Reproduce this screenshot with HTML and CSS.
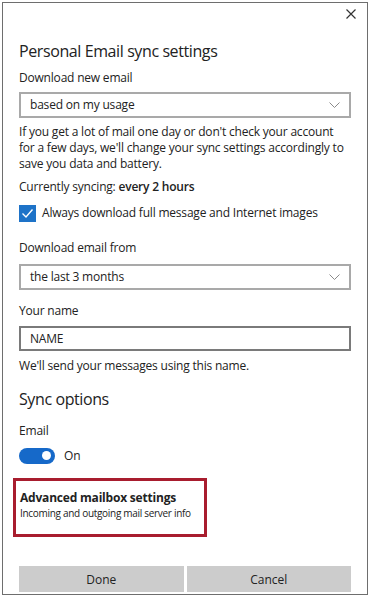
FILE: index.html
```html
<!DOCTYPE html>
<html lang="en">
<head>
  <meta charset="UTF-8">
  <meta name="viewport" content="width=device-width, initial-scale=1.0">
  <title>Personal Email sync settings</title>
  <link rel="stylesheet" href="styles.css">
</head>
<body>
  <div class="dialog">
    <div class="titlebar">
      <button class="close" aria-label="Close">
        <svg width="10" height="10" viewBox="0 0 10 10"><path d="M0.5 0.5 L9.5 9.5 M9.5 0.5 L0.5 9.5" stroke="#333" stroke-width="1.2" fill="none"/></svg>
      </button>
    </div>

    <div class="content">
      <h1>Personal Email sync settings</h1>

      <div class="label l-first">Download new email</div>
      <div class="select s-first">
        <span>based on my usage</span>
        <svg class="chevron" width="11" height="6" viewBox="0 0 11 6"><path d="M0.5 0.5 L5.5 5.5 L10.5 0.5" stroke="#8a8a8a" stroke-width="1" fill="none"/></svg>
      </div>

      <p class="note">If you get a lot of mail one day or don't check your account for a few days, we'll change your sync settings accordingly to save you data and battery.</p>

      <p class="status">Currently syncing: <b>every 2 hours</b></p>

      <label class="check">
        <span class="box">
          <svg width="17" height="17" viewBox="0 0 17 17"><path d="M3.5 8.5 L7 12 L13.5 4.5" stroke="#fff" stroke-width="1.4" fill="none"/></svg>
        </span>
        Always download full message and Internet images
      </label>

      <div class="label l-from">Download email from</div>
      <div class="select s-from">
        <span>the last 3 months</span>
        <svg class="chevron" width="11" height="6" viewBox="0 0 11 6"><path d="M0.5 0.5 L5.5 5.5 L10.5 0.5" stroke="#8a8a8a" stroke-width="1" fill="none"/></svg>
      </div>

      <div class="label l-name">Your name</div>
      <div class="textbox">NAME</div>
      <p class="hint">We'll send your messages using this name.</p>

      <h2>Sync options</h2>
      <div class="label l-email">Email</div>
      <div class="toggle-row">
        <span class="toggle"><span class="knob"></span></span>
        <span>On</span>
      </div>

      <div class="advanced">
        <div class="adv-title">Advanced mailbox settings</div>
        <div class="adv-sub">Incoming and outgoing mail server info</div>
      </div>
    </div>

    <div class="buttons">
      <button class="btn">Done</button>
      <button class="btn">Cancel</button>
    </div>
  </div>
</body>
</html>
```

FILE: styles.css
```css
body {
  margin: 0;
  padding: 0;
  background: #fff;
  font-family: "Open Sans", "Noto Sans", sans-serif;
  color: #222;
}

.dialog {
  margin: 2px;
  height: 591px;
  border: 1px solid #6e6e6e;
  display: flex;
  flex-direction: column;
  background: #fff;
}

.titlebar {
  display: flex;
  justify-content: flex-end;
  height: 36px;
}

.close {
  border: none;
  background: none;
  padding: 0;
  width: 30px;
  height: 22px;
  margin-right: 1px;
  display: flex;
  align-items: center;
  justify-content: center;
}

.content {
  padding: 0 16px;
  font-size: 12px;
  line-height: 16px;
  letter-spacing: -0.2px;
}

h1, h2 {
  margin: 0;
  font-weight: 400;
  font-size: 16px;
  line-height: 24px;
  letter-spacing: -0.4px;
}

.label {
  margin-top: 7px;
}

.l-from { margin-top: 18px; }
.l-name { margin-top: 13px; }
.l-email { margin-top: 12px; }

.select {
  margin-top: 6px;
  height: 22px;
  border: 2px solid #a9a9a9;
  display: flex;
  align-items: center;
  justify-content: space-between;
  padding: 0 9px 0 9px;
}

.s-from { margin-top: 8px; }

.note {
  margin: 6px 0 0;
}

.status {
  margin: 7px 0 0;
}

.status b {
  font-weight: 600;
}

.check {
  margin-top: 9px;
  display: flex;
  align-items: center;
  gap: 6px;
  height: 18px;
}

.box {
  width: 17px;
  height: 17px;
  background: #1e73c8;
  display: flex;
}

.textbox {
  margin-top: 7px;
  height: 21px;
  border: 2px solid #7a7a7a;
  padding: 0 9px;
  display: flex;
  align-items: center;
}

.hint {
  margin: 7px 0 0;
}

h2 {
  margin-top: 13px;
}

.toggle-row {
  margin-top: 8px;
  display: flex;
  align-items: center;
  gap: 9px;
  height: 17px;
}

.toggle {
  width: 36px;
  height: 16px;
  border-radius: 8px;
  background: #1669c9;
  display: flex;
  align-items: center;
  justify-content: flex-end;
}

.knob {
  width: 9px;
  height: 9px;
  border-radius: 50%;
  background: #fff;
  margin-right: 4px;
}

.advanced {
  margin: 14px 0 0 -6px;
  width: 184px;
  height: 44px;
  border: 3px solid #a81d2e;
  padding: 9px 0 0 4px;
  box-sizing: content-box;
}

.adv-title {
  font-weight: 700;
  line-height: 16px;
}

.adv-sub {
  font-size: 10px;
  line-height: 14px;
  letter-spacing: -0.3px;
}

.buttons {
  margin-top: auto;
  padding: 0 16px 2px;
  display: flex;
  gap: 3px;
}

.btn {
  flex: 1;
  height: 26px;
  border: none;
  background: #cccccc;
  font-family: inherit;
  font-size: 12px;
  color: #222;
  padding: 0;
}
```
